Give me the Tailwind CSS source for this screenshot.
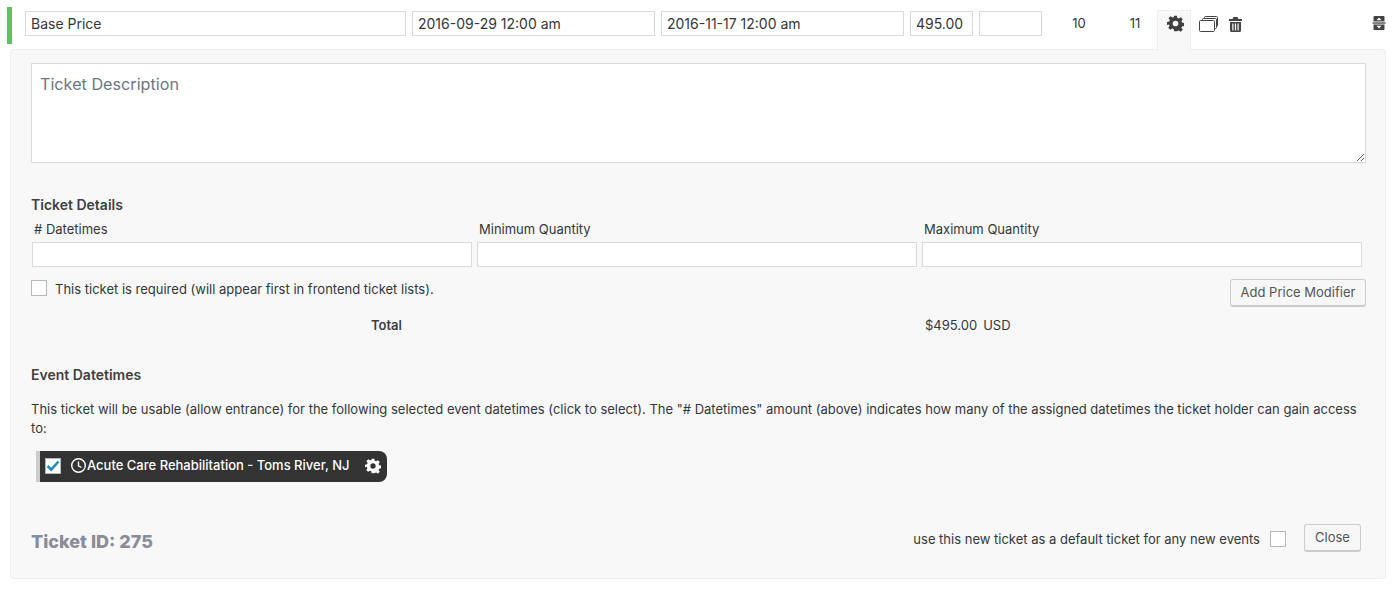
<!DOCTYPE html>
<html lang="en">
<head>
<meta charset="UTF-8">
<title>Ticket editor</title>
<script src="https://cdn.jsdelivr.net/npm/@tailwindcss/browser@4"></script>
</head>
<body class="bg-white text-[#32373c] text-[13px] font-['Inter','Noto_Sans',sans-serif] h-[591px] overflow-hidden">

<!-- ticket row -->
<div class="relative h-[49px]">
  <div class="flex items-start pl-[7px] pt-[7px]">
    <div class="w-[5px] h-[37px] bg-[#5cc25f]"></div>
    <div class="ml-[13px] mt-[4px] flex gap-[6px] text-[14px]">
      <input value="Base Price" class="w-[381px] h-[25px] bg-white border border-[#dadada] px-[5px] text-[#32373c]">
      <input value="2016-09-29 12:00 am" class="w-[243px] h-[25px] bg-white border border-[#dadada] px-[5px] text-[#32373c]">
      <input value="2016-11-17 12:00 am" class="w-[243px] h-[25px] bg-white border border-[#dadada] px-[5px] text-[#32373c]">
      <input value="495.00" class="w-[63px] h-[25px] bg-white border border-[#dadada] px-[5px] text-[#32373c]">
      <input class="w-[63px] h-[25px] bg-white border border-[#dadada] px-[5px]">
    </div>
    <div class="w-[74px] mt-[7px] text-center text-[13px]">10</div>
    <div class="w-[38px] mt-[7px] text-center text-[13px]">11</div>
  </div>
  <!-- active tab joins the panel -->
  <div class="absolute left-[1157px] top-[10px] w-[34px] h-[41px] z-10 bg-[#f8f8f8] border-x border-t border-[#eeeeee] flex justify-center pt-[4px] pl-[3px]">
    <svg width="17" height="17" viewBox="0 0 24 24" fill="#3f3f3f"><path fill-rule="evenodd" d="M10 1h4l.7 3.200 1.900.8 2.800-1.800 2.800 2.800-1.800 2.800.8 1.900 3.200.7v4l-3.200.7-.8 1.900 1.800 2.800-2.800 2.800-2.800-1.800-1.900.8L14 23h-4l-.7-3.200-1.900-.8-2.800 1.800-2.800-2.800 1.800-2.800-.8-1.900L0 14v-4l3.200-.7.8-1.900L2.200 4.600 5 1.800 7.800 3.600l1.900-.8zM12 8a4 4 0 1 0 0 8 4 4 0 0 0 0-8z"/></svg>
  </div>
  <svg class="absolute left-[1199px] top-[16px]" width="20" height="17" viewBox="0 0 20 17" fill="#fff" stroke="#444" stroke-width="1"><rect x="5.500" y="0.500" width="13" height="10" rx="1"/><rect x="3.500" y="2.500" width="14" height="10" rx="1"/><rect x="0.500" y="4.500" width="15" height="11" rx="1"/></svg>
  <svg class="absolute left-[1229px] top-[17px]" width="13" height="15" viewBox="0 0 13 15" fill="#444"><path d="M4.500 0h4l1 2H13v2H0V2h3.500z"/><path fill-rule="evenodd" d="M1 5h11v8.500a1.500 1.500 0 0 1-1.500 1.500h-8A1.500 1.500 0 0 1 1 13.500zM3.300 6.500v7h1.200v-7zM5.900 6.500v7h1.200v-7zM8.500 6.500v7h1.200v-7z"/></svg>
  <svg class="absolute left-[1372px] top-[16px]" width="14" height="14" viewBox="0 0 13 14" fill="#444"><path fill-rule="evenodd" d="M2 0h9a1 1 0 0 1 1 1v4.500H1V1a1 1 0 0 1 1-1zM6.500 1.500 4 4.200h5zM1 8.500h11V13a1 1 0 0 1-1 1H2a1 1 0 0 1-1-1zM6.500 12.500 9 9.800H4z"/><rect x="0" y="6.400" width="13" height="1.300"/></svg>
</div>

<!-- settings panel -->
<div class="ml-[10px] w-[1376px] h-[530px] bg-[#f8f8f8] border border-[#eeeeee] rounded-[3px] pl-[20px] pr-[19px] pt-[13px]">
  <textarea placeholder="Ticket Description" class="block w-[1335px] h-[100px] bg-white border border-[#dadada] pl-[8px] pt-[8px] text-[16.2px] placeholder:text-[#6c7781] [resize:vertical]"></textarea>

  <h4 class="mt-[33px] text-[14px] leading-[18px] font-semibold text-[#3f3f3f]">Ticket Details</h4>
  <div class="mt-[6px] grid grid-cols-[445px_445px_440px] gap-0">
    <div>
      <label class="block pl-[3px] leading-[18px]"># Datetimes</label>
      <input class="mt-[4px] ml-px block w-[440px] h-[25px] bg-white border border-[#dadada]">
    </div>
    <div>
      <label class="block pl-[3px] leading-[18px]">Minimum Quantity</label>
      <input class="mt-[4px] ml-px block w-[440px] h-[25px] bg-white border border-[#dadada]">
    </div>
    <div>
      <label class="block pl-[3px] leading-[18px]">Maximum Quantity</label>
      <input class="mt-[4px] ml-px block w-[440px] h-[25px] bg-white border border-[#dadada]">
    </div>
  </div>

  <div class="mt-[13px] flex items-start justify-between">
    <label class="flex items-start gap-[8px]">
      <span class="w-4 h-4 bg-white border border-[#b4b9be]"></span>
      <span class="leading-[18px]">This ticket is required (will appear first in frontend ticket lists).</span>
    </label>
    <button class="mt-[-1px] h-[28px] w-[136px] bg-[#f7f7f7] border border-[#cccccc] border-b-2 rounded-[3px] text-[#555555]">Add Price Modifier</button>
  </div>
  <div class="mt-[9px] flex leading-[18px]">
    <div class="w-[371px] text-right font-semibold text-[#3f3f3f]">Total</div>
    <div class="ml-[523px]">$495.00</div>
    <div class="ml-[6px]">USD</div>
  </div>

  <h4 class="mt-[32px] text-[14px] leading-[18px] font-semibold text-[#3f3f3f]">Event Datetimes</h4>
  <p class="mt-[16px] leading-[19px]">This ticket will be usable (allow entrance) for the following selected event datetimes (click to select). The "# Datetimes" amount (above) indicates how many of the assigned datetimes the ticket holder can gain access to:</p>

  <div class="mt-[13px] ml-[5px] w-[351px] h-[31px] pb-[2px] flex items-center bg-[#333333] border-l-4 border-[#cccccc] rounded-r-[8px] text-white">
    <span class="ml-[5px] w-4 h-4 bg-white border border-[#b4b9be] flex items-center justify-center">
      <svg width="14" height="12" viewBox="0 0 14 12" fill="none" stroke="#1e8cbe" stroke-width="2.600"><path d="M1.500 6 5.200 9.600 12.500 1.500"/></svg>
    </span>
    <svg class="ml-[9px]" width="17" height="17" viewBox="0 0 17 17" fill="none" stroke="#fff" stroke-width="1.400"><circle cx="8.500" cy="8.500" r="6.800"/><path d="M8.500 4.500v4.300l3 1.700"/></svg>
    <span class="font-medium">Acute Care Rehabilitation - Toms River, NJ</span>
    <svg class="ml-[16px]" width="16" height="16" viewBox="0 0 24 24" fill="#fff"><path fill-rule="evenodd" d="M10 1h4l.7 3.200 1.900.8 2.800-1.800 2.800 2.800-1.800 2.800.8 1.900 3.200.7v4l-3.200.7-.8 1.900 1.800 2.800-2.800 2.800-2.800-1.800-1.900.8L14 23h-4l-.7-3.200-1.900-.8-2.800 1.800-2.800-2.800 1.800-2.800-.8-1.900L0 14v-4l3.200-.7.8-1.900L2.200 4.600 5 1.800 7.800 3.600l1.900-.8zM12 8a4 4 0 1 0 0 8 4 4 0 0 0 0-8z"/></svg>
  </div>

  <div class="mt-[42px] flex items-start justify-between">
    <div class="mt-[6px] text-[18px] leading-[24px] font-extrabold text-[#8a8c98]">Ticket ID: 275</div>
    <div class="flex items-start pr-[5px]">
      <span class="mt-[6px] leading-[18px]">use this new ticket as a default ticket for any new events</span>
      <span class="ml-[10px] mt-[7px] w-4 h-4 bg-white border border-[#b4b9be]"></span>
      <button class="ml-[18px] h-[28px] w-[57px] bg-[#f7f7f7] border border-[#cccccc] border-b-2 rounded-[3px] text-[#555555]">Close</button>
    </div>
  </div>
</div>
</body>
</html>
